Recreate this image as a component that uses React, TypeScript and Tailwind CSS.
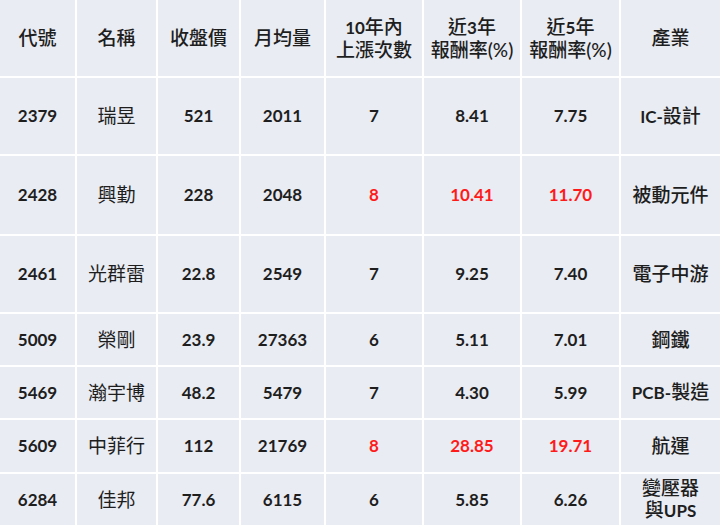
import React from "react";

const cols = ["w-[75px]", "w-[79px]", "w-[81px]", "w-[83px]", "w-[96px]", "w-[96px]", "w-[97px]", "w-[99px]"];

type Cell = { t: string; red?: boolean; cjk?: boolean; multi?: string[] } | string;
type Row = { h: string; cells: Cell[] };

const R = (t: string) => ({ t, red: true });
const C = (t: string) => ({ t, cjk: true });

const rows: Row[] = [
  { h: "h-[76px]", cells: ["2379", C("瑞昱"), "521", "2011", "7", "8.41", "7.75", C("IC-設計")] },
  { h: "h-[78px]", cells: ["2428", C("興勤"), "228", "2048", R("8"), R("10.41"), R("11.70"), C("被動元件")] },
  { h: "h-[76px]", cells: ["2461", C("光群雷"), "22.8", "2549", "7", "9.25", "7.40", C("電子中游")] },
  { h: "h-[51px]", cells: ["5009", C("榮剛"), "23.9", "27363", "6", "5.11", "7.01", C("鋼鐵")] },
  { h: "h-[51px]", cells: ["5469", C("瀚宇博"), "48.2", "5479", "7", "4.30", "5.99", C("PCB-製造")] },
  { h: "h-[52px]", cells: ["5609", C("中菲行"), "112", "21769", R("8"), R("28.85"), R("19.71"), C("航運")] },
  { h: "h-[51px]", cells: ["6284", C("佳邦"), "77.6", "6115", "6", "5.85", "6.26", { t: "", multi: ["變壓器", "與UPS"] }] },
];

const headers: string[][] = [
  ["代號"], ["名稱"], ["收盤價"], ["月均量"], ["10年內", "上漲次數"], ["近3年", "報酬率(%)"], ["近5年", "報酬率(%)"], ["產業"],
];

const font = { fontFamily: "Lato, 'Noto Sans CJK TC', sans-serif" };

// Render latin letters/digits bold within a CJK string
function Mixed({ s, boldParens = false }: { s: string; boldParens?: boolean }) {
  const parts = s.split(/([A-Za-z0-9\-]+)/);
  return (
    <>
      {parts.map((p, i) =>
        /^[A-Za-z0-9\-]+$/.test(p) ? (
          <span key={i} className="font-bold text-[17px]">{p}</span>
        ) : p === "(%)" && !boldParens ? (
          <span key={i} className="text-[17px] font-normal">{p}</span>
        ) : (
          <span key={i}>{p}</span>
        )
      )}
    </>
  );
}

export default function App() {
  return (
    <div className="w-[720px] h-[525px] bg-white overflow-hidden" style={font}>
      <div className="flex flex-col gap-[2px]">
        <div className="flex gap-[2px] h-[76px]">
          {headers.map((lines, i) => (
            <div key={i} className={`${cols[i]} bg-[#e9ecf2] flex flex-col items-center justify-center text-[19px] leading-[22px] font-medium text-[#1e1e1e]`}>
              {lines.map((l, j) => (
                <div key={j}>
                  <Mixed s={l} />
                </div>
              ))}
            </div>
          ))}
        </div>
        {rows.map((r, ri) => (
          <div key={ri} className={`flex gap-[2px] ${r.h}`}>
            {r.cells.map((c, ci) => {
              const o = typeof c === "string" ? { t: c } : c;
              const red = (o as any).red;
              const cjk = (o as any).cjk;
              const multi = (o as any).multi as string[] | undefined;
              const industry = ci === 7;
              return (
                <div
                  key={ci}
                  className={`${cols[ci]} bg-[#e9ecf2] flex flex-col items-center justify-center ${
                    red ? "text-[#ff1a1a] font-bold" : "text-[#1e1e1e]"
                  } ${cjk || multi ? `text-[19px] ${industry ? "font-medium" : "font-normal"}` : "text-[17px] font-bold"} leading-[22px]`}
                >
                  {multi ? (
                    multi.map((m, k) => (
                      <div key={k}>
                        <Mixed s={m} />
                      </div>
                    ))
                  ) : cjk ? (
                    <span>
                      <Mixed s={o.t} />
                    </span>
                  ) : (
                    <span>{o.t}</span>
                  )}
                </div>
              );
            })}
          </div>
        ))}
      </div>
    </div>
  );
}
